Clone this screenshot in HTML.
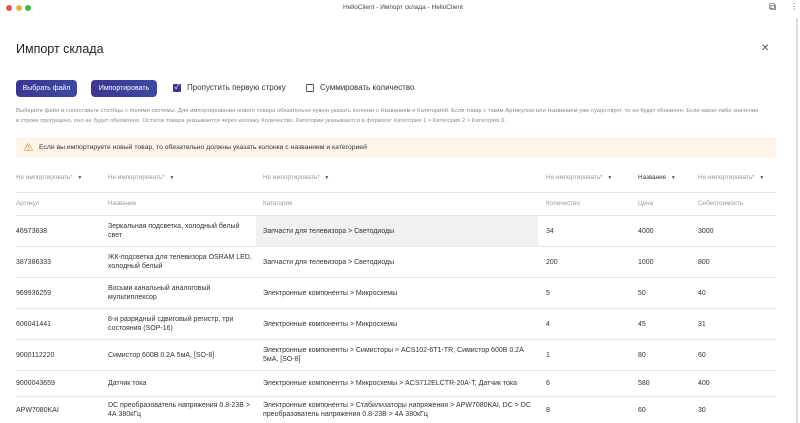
<!DOCTYPE html>
<html><head><meta charset="utf-8"><style>
*{margin:0;padding:0;box-sizing:border-box}
body{width:800px;height:423px;overflow:hidden;background:#fff;font-family:"Liberation Sans","Noto Sans CJK SC",sans-serif;color:#2a2a2a;position:relative}
.a{position:absolute;white-space:nowrap}
.dot{position:absolute;top:5px;width:6px;height:6px;border-radius:50%}
.btn{position:absolute;top:80px;height:17px;border-radius:4px;background:linear-gradient(90deg,#3e3592,#3b4aa0);color:#fff;font-size:7px;line-height:17px;text-align:center}
.small{font-size:5.75px;color:#888;letter-spacing:0.05px}
.sel{font-size:6.3px;color:#999;top:174px}
.sel b{font-weight:normal;font-size:5px;margin-left:3px;color:#555}
.lbl{font-size:6.3px;color:#999;top:200px}
.hr{position:absolute;left:16px;width:760px;height:1px;background:#e8e8e8}
.c{position:absolute;font-size:7px;color:#333;line-height:9px;display:flex;align-items:center}
</style></head><body>
<div class="dot" style="left:6px;background:#e05a55"></div>
<div class="dot" style="left:16px;background:#e9b43a"></div>
<div class="dot" style="left:25px;background:#3dbb3f"></div>
<div class="a" style="left:343px;top:4px;font-size:6.5px;color:#444">HelloClient - Импорт склада - HelloClient</div>
<div class="a" style="left:769px;top:2px;font-size:10px;color:#444">⧉</div>
<div class="a" style="left:790px;top:2px;font-size:8px;color:#444">⋮</div>
<div style="position:absolute;left:796px;top:18px;width:2px;height:405px;background:#ddd"></div>

<div class="a" style="left:16px;top:42px;font-size:12.5px;color:#222">Импорт склада</div>
<div class="a" style="left:761px;top:43px;font-size:10px;color:#555">✕</div>

<div class="btn" style="left:16px;width:61px">Выбрать файл</div>
<div class="btn" style="left:91px;width:66px">Импортировать</div>
<div style="position:absolute;left:173px;top:84px;width:8px;height:8px;background:#3e3592;border-radius:1px;color:#fff;font-size:7px;line-height:8px;text-align:center">✓</div>
<div class="a" style="left:187px;top:83px;font-size:8px;color:#333">Пропустить первую строку</div>
<div style="position:absolute;left:306px;top:84px;width:8px;height:8px;border:1px solid #555;border-radius:1px"></div>
<div class="a" style="left:320px;top:83px;font-size:8px;color:#333">Суммировать количество</div>

<div class="a small" style="left:16px;top:108px">Выберите файл и сопоставьте столбцы с полями системы. Для импортирования нового товара обязательно нужно указать колонки с Названием и Категорией. Если товар с таким Артикулом или Названием уже существует, то он будет обновлен. Если какое-либо значение</div>
<div class="a small" style="left:16px;top:118px">в строке пропущено, оно не будет обновлено. Остаток товара указывается через колонку Количество. Категории указываются в формате: Категория 1 &gt; Категория 2 &gt; Категория 3.</div>

<div style="position:absolute;left:16px;top:137px;width:760px;height:21px;background:#fdf5ea;border-radius:3px"></div>
<div class="a" style="left:24px;top:141px;font-size:9px;color:#d08a3a">⚠</div>
<div class="a" style="left:39px;top:144px;font-size:6.8px;color:#333">Если вы импортируете новый товар, то обязательно должны указать колонки с названием и категорией</div>

<div class="a sel" style="left:16px">Не импортировать* <b>▼</b></div>
<div class="a sel" style="left:108px">Не импортировать* <b>▼</b></div>
<div class="a sel" style="left:263px">Не импортировать* <b>▼</b></div>
<div class="a sel" style="left:546px">Не импортировать* <b>▼</b></div>
<div class="a sel" style="left:638px;color:#333">Название <b>▼</b></div>
<div class="a sel" style="left:698px">Не импортировать* <b>▼</b></div>
<div class="hr" style="top:192px"></div>
<div class="a lbl" style="left:16px">Артикул</div>
<div class="a lbl" style="left:108px">Название</div>
<div class="a lbl" style="left:263px">Категория</div>
<div class="a lbl" style="left:546px">Количество</div>
<div class="a lbl" style="left:638px">Цена</div>
<div class="a lbl" style="left:698px">Себестоимость</div>
<div class="hr" style="top:215px"></div>
<div style="position:absolute;left:256px;top:216px;width:282px;height:30px;background:#f1f1f3"></div>

<div class="hr" style="top:246px"></div>
<div class="hr" style="top:277px"></div>
<div class="hr" style="top:308px"></div>
<div class="hr" style="top:339px"></div>
<div class="hr" style="top:370px"></div>
<div class="hr" style="top:396px"></div>

<div class="c" style="left:16px;top:216px;height:30px">46973638</div>
<div class="c" style="left:108px;top:216px;height:30px;width:140px">Зеркальная подсветка, холодный белый свет</div>
<div class="c" style="left:263px;top:216px;height:30px">Запчасти для телевизора &gt; Светодиоды</div>
<div class="c" style="left:546px;top:216px;height:30px">34</div>
<div class="c" style="left:638px;top:216px;height:30px">4000</div>
<div class="c" style="left:698px;top:216px;height:30px">3000</div>

<div class="c" style="left:16px;top:247px;height:30px">387386333</div>
<div class="c" style="left:108px;top:247px;height:30px;width:150px">ЖК-подсветка для телевизора OSRAM LED, холодный белый</div>
<div class="c" style="left:263px;top:247px;height:30px">Запчасти для телевизора &gt; Светодиоды</div>
<div class="c" style="left:546px;top:247px;height:30px">200</div>
<div class="c" style="left:638px;top:247px;height:30px">1000</div>
<div class="c" style="left:698px;top:247px;height:30px">800</div>

<div class="c" style="left:16px;top:278px;height:30px">969936259</div>
<div class="c" style="left:108px;top:278px;height:30px;width:130px">Восьми канальный аналоговый мультиплексор</div>
<div class="c" style="left:263px;top:278px;height:30px">Электронные компоненты &gt; Микросхемы</div>
<div class="c" style="left:546px;top:278px;height:30px">5</div>
<div class="c" style="left:638px;top:278px;height:30px">50</div>
<div class="c" style="left:698px;top:278px;height:30px">40</div>

<div class="c" style="left:16px;top:309px;height:30px">606041441</div>
<div class="c" style="left:108px;top:309px;height:30px;width:140px">8-и разрядный сдвиговый регистр, три состояния (SOP-16)</div>
<div class="c" style="left:263px;top:309px;height:30px">Электронные компоненты &gt; Микросхемы</div>
<div class="c" style="left:546px;top:309px;height:30px">4</div>
<div class="c" style="left:638px;top:309px;height:30px">45</div>
<div class="c" style="left:698px;top:309px;height:30px">31</div>

<div class="c" style="left:16px;top:340px;height:30px">9000112220</div>
<div class="c" style="left:108px;top:340px;height:30px">Симистор 600В 0.2А 5мА, [SO-8]</div>
<div class="c" style="left:263px;top:340px;height:30px;width:270px">Электронные компоненты &gt; Симисторы &gt; ACS102-6T1-TR, Симистор 600В 0.2А 5мА, [SO-8]</div>
<div class="c" style="left:546px;top:340px;height:30px">1</div>
<div class="c" style="left:638px;top:340px;height:30px">80</div>
<div class="c" style="left:698px;top:340px;height:30px">60</div>

<div class="c" style="left:16px;top:371px;height:25px">9000043659</div>
<div class="c" style="left:108px;top:371px;height:25px">Датчик тока</div>
<div class="c" style="left:263px;top:371px;height:25px">Электронные компоненты &gt; Микросхемы &gt; ACS712ELCTR-20A-T, Датчик тока</div>
<div class="c" style="left:546px;top:371px;height:25px">6</div>
<div class="c" style="left:638px;top:371px;height:25px">580</div>
<div class="c" style="left:698px;top:371px;height:25px">400</div>

<div class="c" style="left:16px;top:397px;height:26px">APW7080KAI</div>
<div class="c" style="left:108px;top:397px;height:26px;width:145px">DC преобразователь напряжения 0.8-23В &gt; 4А 380кГц</div>
<div class="c" style="left:263px;top:397px;height:26px;width:275px">Электронные компоненты &gt; Стабилизаторы напряжения &gt; APW7080KAI, DC &gt; DC преобразователь напряжения 0.8-23В &gt; 4А 380кГц</div>
<div class="c" style="left:546px;top:397px;height:26px">8</div>
<div class="c" style="left:638px;top:397px;height:26px">60</div>
<div class="c" style="left:698px;top:397px;height:26px">30</div>
</body></html>
